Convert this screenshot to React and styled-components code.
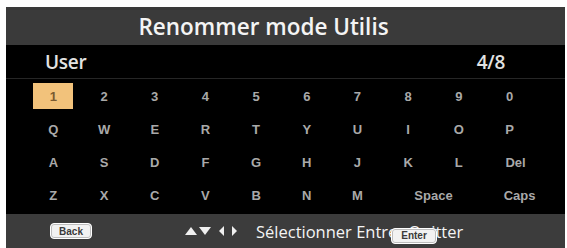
import React from "react";
import styled, { createGlobalStyle } from "styled-components";

const Global = createGlobalStyle`
  html, body { margin: 0; padding: 0; background: #fff; }
  body { width: 567px; height: 248px; overflow: hidden; }
`;

const Panel = styled.div`
  margin: 7px 0 0 6px;
  width: 559px;
  height: 241px;
  display: flex;
  flex-direction: column;
  background: #000;
`;

const TitleBar = styled.div`
  height: 38px;
  background: #3a3a3a;
  color: #f4f4f4;
  font-family: "Open Sans", sans-serif;
  font-weight: 600;
  font-size: 22.5px;
  display: flex;
  align-items: center;
  justify-content: center;
  padding-right: 44px;
  box-sizing: border-box;
`;

const Body = styled.div`
  flex: 1;
  display: flex;
  flex-direction: column;
  background: #000;
`;

const NameRow = styled.div`
  height: 33px;
  display: flex;
  align-items: center;
  justify-content: space-between;
  padding: 0 60px 0 39px;
  border-bottom: 1px solid #262626;
  color: #e2e2e2;
  font-family: "Open Sans", sans-serif;
  font-weight: 600;
  font-size: 19px;
  letter-spacing: -0.3px;
`;

const Keys = styled.div`
  display: grid;
  grid-template-columns: repeat(10, 50.7px);
  grid-auto-rows: 33px;
  padding: 1px 0 0 22px;
`;

const Key = styled.div`
  grid-column: span ${(p) => p.span || 1};
  display: flex;
  align-items: center;
  justify-content: center;
  padding-left: ${(p) => p.shift || 0}px;
  font-family: "Liberation Sans", Arial, sans-serif;
  font-weight: bold;
  font-size: 13px;
  color: #a9a9a9;
`;

const Selected = styled.span`
  width: 40px;
  height: 26px;
  display: flex;
  align-items: center;
  justify-content: center;
  background: #f2c27b;
  color: #7a5a30;
  margin-top: -1px;
`;

const Footer = styled.div`
  height: 34px;
  background: #3c3c3c;
  display: flex;
  align-items: center;
  padding-left: 44px;
  position: relative;
`;

const Badge = styled.span`
  display: inline-flex;
  align-items: center;
  justify-content: center;
  height: 16px;
  padding: 0 4px;
  border-radius: 4px;
  background: #f2f2f2;
  border: 1px solid #fff;
  box-shadow: inset 0 0 0 1px #bdbdbd;
  color: #3a3a3a;
  font-family: "Liberation Sans", Arial, sans-serif;
  font-weight: bold;
  font-size: 10px;
  box-sizing: border-box;
  width: ${(p) => p.w}px;
`;

const Arrows = styled.div`
  display: flex;
  align-items: center;
  gap: 2px;
  margin-left: 93px;
`;

const Help = styled.span`
  margin-left: 19px;
  color: #f4f4f4;
  font-family: "Open Sans", sans-serif;
  font-size: 16.5px;
  white-space: nowrap;
`;

const Overlay = styled.div`
  position: absolute;
  left: 385px;
  top: 11px;
`;

const rows = [
  ["1", "2", "3", "4", "5", "6", "7", "8", "9", "0"],
  ["Q", "W", "E", "R", "T", "Y", "U", "I", "O", "P"],
  ["A", "S", "D", "F", "G", "H", "J", "K", "L", { t: "Del", shift: 12 }],
  ["Z", "X", "C", "V", "B", "N", "M", { t: "Space", span: 2 }, { t: "Caps", shift: 20 }],
];

const Tri = ({ dir }) => {
  const pts = {
    up: "0,10 6,2 12,10",
    down: "0,2 12,2 6,10",
  };
  return (
    <svg width="12" height="12" viewBox="0 0 12 12">
      <polygon points={pts[dir]} fill="#f0f0f0" />
    </svg>
  );
};

const Side = ({ dir }) => (
  <svg width="6" height="12" viewBox="0 0 6 12">
    <polygon points={dir === "left" ? "5,1 5,11 0,6" : "1,1 1,11 6,6"} fill="#f0f0f0" />
  </svg>
);

export default function App() {
  return (
    <>
      <Global />
      <Panel>
        <TitleBar>Renommer mode Utilis</TitleBar>
        <Body>
          <NameRow>
            <span>User</span>
            <span>4/8</span>
          </NameRow>
          <Keys>
            {rows.flat().map((k, i) => {
              const o = typeof k === "string" ? { t: k } : k;
              return (
                <Key key={i} span={o.span} shift={o.shift}>
                  {i === 0 ? <Selected>{o.t}</Selected> : o.t}
                </Key>
              );
            })}
          </Keys>
        </Body>
        <Footer>
          <Badge w={42}>Back</Badge>
          <Arrows>
            <Tri dir="up" />
            <Tri dir="down" />
            <span style={{ width: 4 }} />
            <Side dir="left" />
            <span style={{ width: 2 }} />
            <Side dir="right" />
          </Arrows>
          <Help>Sélectionner Entrer Quitter</Help>
          <Overlay>
            <Badge w={46}>Enter</Badge>
          </Overlay>
        </Footer>
      </Panel>
    </>
  );
}
